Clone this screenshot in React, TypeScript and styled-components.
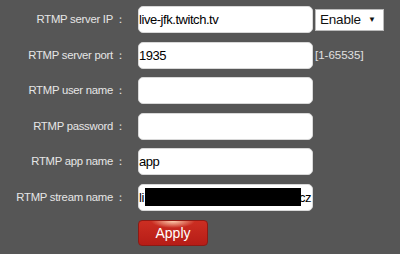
import styled, { createGlobalStyle } from 'styled-components';

const GlobalStyle = createGlobalStyle`
  html, body {
    margin: 0;
    padding: 0;
    background: #565656;
  }
  body {
    font-family: "Liberation Sans", Arial, sans-serif;
  }
`;

const Page = styled.div`
  width: 400px;
  height: 254px;
  background: #565656;
  box-sizing: border-box;
  padding-top: 6px;
`;

const Form = styled.div`
  display: grid;
  grid-template-columns: 138px auto 1fr;
  grid-auto-rows: 27px;
  row-gap: 8.6px;
  align-items: center;
`;

const Label = styled.label`
  justify-self: end;
  padding-right: 12px;
  font-size: 11.3px;
  letter-spacing: -0.25px;
  color: #e6e6e6;
  white-space: nowrap;
`;

const Colon = styled.span`
  margin-left: 2px;
  letter-spacing: 0;
`;

const Field = styled.div`
  position: relative;
  width: 175px;
  height: 27px;
`;

const TextInput = styled.input`
  box-sizing: border-box;
  width: 100%;
  height: 100%;
  margin: 0;
  padding: 0;
  border: 1px solid #d8d8d8;
  border-radius: 5px;
  background: #fff;
  font-family: inherit;
  font-size: 13px;
  letter-spacing: -0.45px;
  color: #000;
  outline: none;
`;

const Redaction = styled.div`
  position: absolute;
  left: 7px;
  top: 4px;
  width: 156px;
  height: 18px;
  background: #000;
`;

const Tail = styled.span`
  position: absolute;
  right: 2px;
  top: 6px;
  font-size: 13px;
  letter-spacing: -0.45px;
  color: #000;
`;

const Extra = styled.div`
  display: flex;
  align-items: center;
  padding-left: 2px;
`;

const SelectWrap = styled.div`
  position: relative;
  width: 69px;
  height: 22px;

  &::after {
    content: '▼';
    position: absolute;
    right: 8px;
    top: 6px;
    font-size: 8px;
    color: #111;
    pointer-events: none;
  }
`;

const Select = styled.select`
  appearance: none;
  box-sizing: border-box;
  width: 100%;
  height: 100%;
  margin: 0;
  padding: 0 0 0 4px;
  border: 1px solid #bbb;
  border-radius: 0;
  background: #fff;
  font-family: inherit;
  font-size: 13.5px;
  letter-spacing: -0.2px;
  color: #111;
  outline: none;
`;

const Hint = styled.span`
  font-size: 11.5px;
  color: #e0e0e0;
`;

const ApplyButton = styled.button`
  grid-column: 2;
  width: 70px;
  height: 26px;
  margin: 0;
  padding: 0;
  border: 1px solid #8c1a14;
  border-radius: 4px;
  background:
    radial-gradient(ellipse 22px 7px at 50% 0%, rgba(255, 214, 180, 0.95), rgba(255, 190, 150, 0) 100%),
    linear-gradient(#cc2e22, #b61d17);
  color: #fff;
  font-family: inherit;
  font-size: 14px;
  cursor: pointer;
`;

const rows = [
  { label: 'RTMP server IP', value: 'live-jfk.twitch.tv', extra: 'select' },
  { label: 'RTMP server port', value: '1935', extra: 'hint' },
  { label: 'RTMP user name', value: '' },
  { label: 'RTMP password', value: '' },
  { label: 'RTMP app name', value: 'app' },
  { label: 'RTMP stream name', value: 'li', redact: true },
];

export default function App() {
  return (
    <Page>
      <GlobalStyle />
      <Form>
        {rows.map((r) => (
          <>
            <Label key={r.label + '-l'}>
              {r.label}
              <Colon>：</Colon>
            </Label>
            <Field key={r.label + '-f'}>
              <TextInput defaultValue={r.value} />
              {r.redact && (
                <>
                  <Redaction />
                  <Tail>cz</Tail>
                </>
              )}
            </Field>
            <Extra key={r.label + '-e'}>
              {r.extra === 'select' && (
                <SelectWrap>
                  <Select defaultValue="Enable">
                    <option>Enable</option>
                    <option>Disable</option>
                  </Select>
                </SelectWrap>
              )}
              {r.extra === 'hint' && <Hint>[1-65535]</Hint>}
            </Extra>
          </>
        ))}
        <ApplyButton>Apply</ApplyButton>
      </Form>
    </Page>
  );
}
